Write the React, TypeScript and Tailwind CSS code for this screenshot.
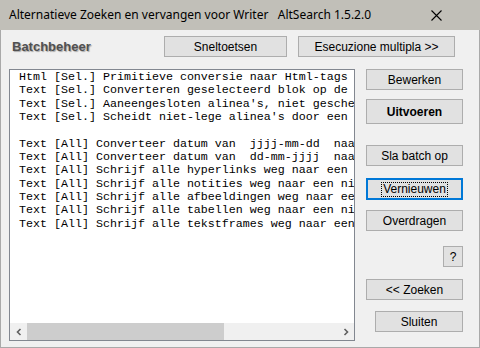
import React from 'react';

const lines = [
  'Html [Sel.] Primitieve conversie naar Html-tags',
  'Text [Sel.] Converteren geselecteerd blok op de',
  "Text [Sel.] Aaneengesloten alinea's, niet gesche",
  "Text [Sel.] Scheidt niet-lege alinea's door een",
  '',
  'Text [All] Converteer datum van  jjjj-mm-dd  naa',
  'Text [All] Converteer datum van  dd-mm-jjjj  naa',
  'Text [All] Schrijf alle hyperlinks weg naar een',
  'Text [All] Schrijf alle notities weg naar een ni',
  'Text [All] Schrijf alle afbeeldingen weg naar ee',
  'Text [All] Schrijf alle tabellen weg naar een ni',
  'Text [All] Schrijf alle tekstframes weg naar een',
];

const btn =
  'flex items-center justify-center bg-[#e1e1e1] border border-[#adadad] text-[12px] text-black leading-none';

function Btn({ className = '', children }: { className?: string; children: React.ReactNode }) {
  return <div className={`${btn} ${className}`}>{children}</div>;
}

export default function App() {
  return (
    <div
      className="w-[480px] h-[348px] flex flex-col bg-[#f0f0f0] overflow-hidden"
      style={{ fontFamily: '"Liberation Sans", Arial, sans-serif' }}
    >
      {/* Title bar */}
      <div className="h-[30px] shrink-0 bg-[#c1bfb8] flex items-center pl-[9px] pr-[38px]">
        <span className="text-[12px] text-black whitespace-pre" style={{ fontFamily: '"Noto Sans", sans-serif' }}>
          Alternatieve Zoeken en vervangen voor Writer   AltSearch 1.5.2.0
        </span>
        <svg className="ml-auto" width="11" height="11" viewBox="0 0 11 11">
          <path d="M0.5 0.5 L10.5 10.5 M10.5 0.5 L0.5 10.5" stroke="#000" strokeWidth="1.1" />
        </svg>
      </div>

      <div className="flex-1 flex flex-col border-x border-b border-[#a9a9a9]">
        {/* Top row */}
        <div className="flex items-center mt-[6px] h-[21px]">
          <span
            className="w-[163px] pl-[11px] text-[13px] font-bold text-[#505050]"
            style={{ textShadow: '1px 1px 1px rgba(0,0,0,0.3)' }}
          >
            Batchbeheer
          </span>
          <Btn className="w-[123px] h-[21px]">Sneltoetsen</Btn>
          <Btn className="w-[157px] h-[21px] ml-[11px]">Esecuzione multipla &gt;&gt;</Btn>
        </div>

        {/* Main */}
        <div className="flex mt-[12px]">
          <div className="ml-[8px] w-[346px] h-[272px] border border-[#828790] bg-white flex flex-col">
            <div
              className="flex-1 overflow-hidden pl-[9px] pt-[1px] text-[11.67px] leading-[13.33px] text-black whitespace-pre"
              style={{ fontFamily: '"Liberation Mono", "Courier New", monospace' }}
            >
              {lines.map((l, i) => (
                <div key={i} className="h-[13.33px]">
                  {l}
                </div>
              ))}
            </div>
            <div className="h-[17px] flex bg-[#f0f0f0]">
              <div className="w-[17px] flex items-center justify-center">
                <svg width="8" height="8" viewBox="0 0 8 8">
                  <path d="M5.5 1 L2.5 4 L5.5 7" stroke="#606060" strokeWidth="1.6" fill="none" />
                </svg>
              </div>
              <div className="w-[197px] bg-[#cdcdcd]" />
              <div className="flex-1" />
              <div className="w-[17px] flex items-center justify-center">
                <svg width="8" height="8" viewBox="0 0 8 8">
                  <path d="M2.5 1 L5.5 4 L2.5 7" stroke="#606060" strokeWidth="1.6" fill="none" />
                </svg>
              </div>
            </div>
          </div>

          {/* Right column */}
          <div className="ml-[11px] w-[97px] flex flex-col items-end">
            <Btn className="w-full h-[21px]">Bewerken</Btn>
            <Btn className="w-full h-[25px] mt-[9px] font-bold text-[12.5px]">Uitvoeren</Btn>
            <Btn className="w-full h-[21px] mt-[21px]">Sla batch op</Btn>
            <div className="w-full h-[22px] mt-[12px] border-2 border-[#0078d7] bg-[#e1e1e1] flex items-center justify-center">
              <span className="text-[12px] leading-[13px] text-black px-[1px] outline outline-1 outline-dotted outline-[#000]">
                Vernieuwen
              </span>
            </div>
            <Btn className="w-full h-[21px] mt-[10px]">Overdragen</Btn>
            <Btn className="w-[20px] h-[21px] mt-[15px]">?</Btn>
            <Btn className="w-full h-[21px] mt-[12px]">&lt;&lt; Zoeken</Btn>
            <Btn className="w-[88px] h-[21px] mt-[11px]">Sluiten</Btn>
          </div>
        </div>
      </div>
    </div>
  );
}
